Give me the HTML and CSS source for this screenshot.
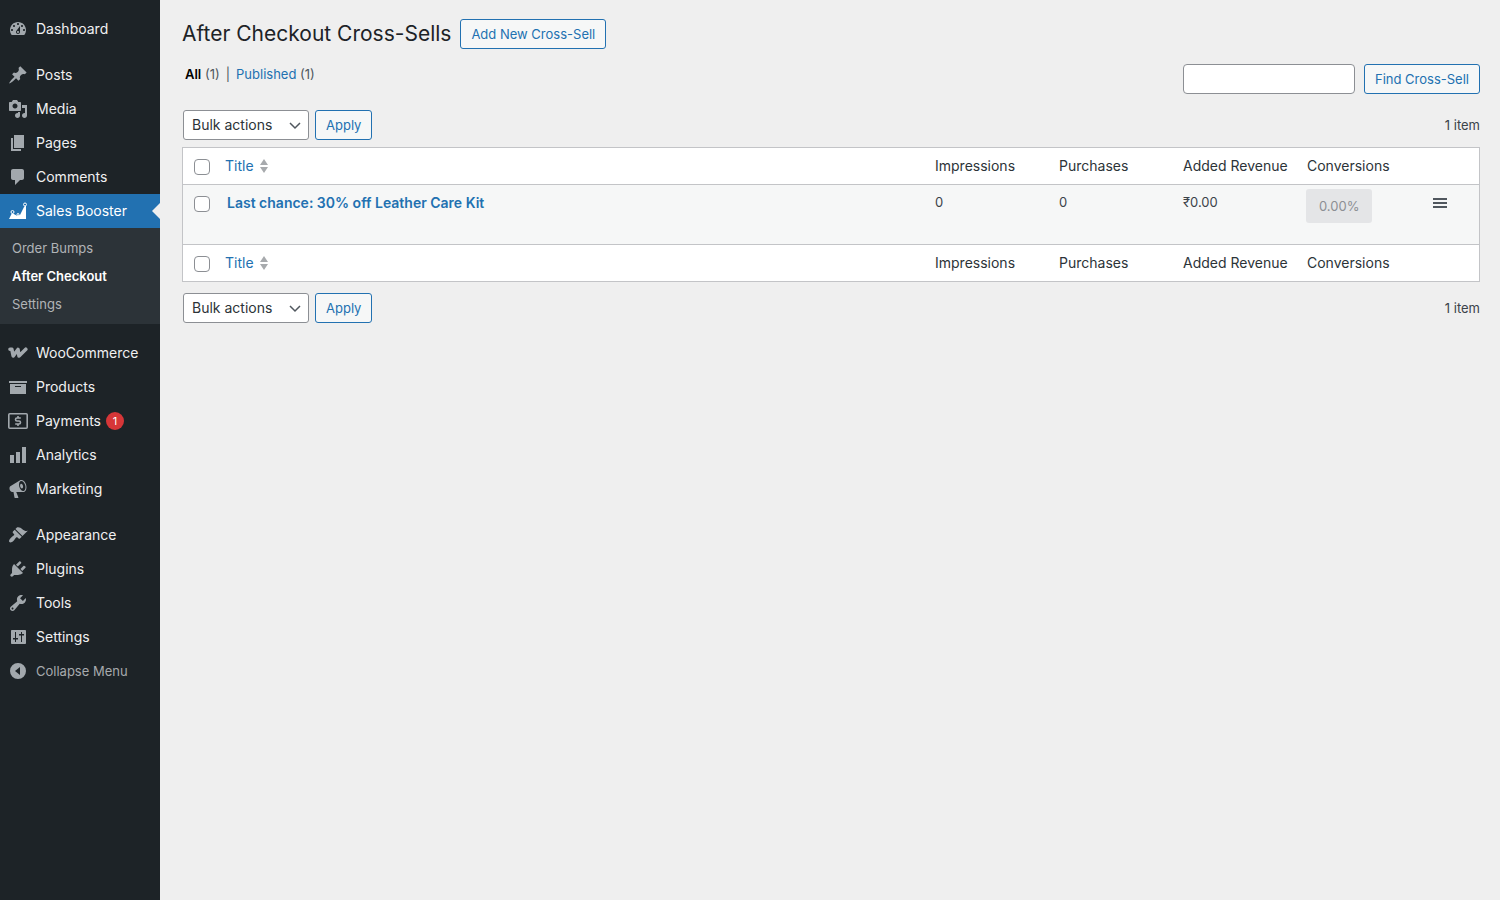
FILE: index.html
```html
<!DOCTYPE html>
<html lang="en">
<head>
    <meta charset="UTF-8">
    <meta name="viewport" content="width=device-width, initial-scale=1.0">
    <title>After Checkout Cross-Sells</title>
    <link rel="stylesheet" href="styles.css">
</head>
<body>
    <div class="layout">
        <nav class="sidebar" aria-label="Main menu">
            <ul class="menu">
                <li><a href="#"><svg viewBox="0 0 20 20"><path d="M3.76 16h12.48c1.1-1.37 1.76-3.11 1.76-5 0-4.42-3.58-8-8-8s-8 3.58-8 8c0 1.89.66 3.63 1.76 5zM10 4c.55 0 1 .45 1 1s-.45 1-1 1-1-.45-1-1 .45-1 1-1zM6 6c.55 0 1 .45 1 1s-.45 1-1 1-1-.45-1-1 .45-1 1-1zm8 0c.55 0 1 .45 1 1s-.45 1-1 1-1-.45-1-1 .45-1 1-1zm-5.37 5.55L12 7v6c0 1.1-.9 2-2 2s-2-.9-2-2c0-.57.24-1.08.63-1.45zM4 10c.55 0 1 .45 1 1s-.45 1-1 1-1-.45-1-1 .45-1 1-1zm12 0c.55 0 1 .45 1 1s-.45 1-1 1-1-.45-1-1 .45-1 1-1zm-5 3c0-.55-.45-1-1-1s-1 .45-1 1 .45 1 1 1 1-.45 1-1z"/></svg>Dashboard</a></li>
            </ul>
            <ul class="menu">
                <li><a href="#"><svg viewBox="0 0 20 20"><path d="M10.44 3.02l1.82-1.82 6.36 6.35-1.83 1.82c-1.05-.68-2.48-.57-3.41.36l-.75.75c-.92.93-1.04 2.35-.35 3.41l-1.83 1.82-2.41-2.41-2.8 2.79c-.42.42-3.38 2.71-3.8 2.29s1.86-3.39 2.28-3.81l2.79-2.79L4.1 9.36l1.83-1.82c1.05.69 2.48.57 3.4-.36l.75-.75c.93-.92 1.05-2.35.36-3.41z"/></svg>Posts</a></li>
                <li><a href="#"><svg viewBox="0 0 20 20"><path d="M13 11V4c0-.55-.45-1-1-1h-1.67L9 1H5L3.67 3H2c-.55 0-1 .45-1 1v7c0 .55.45 1 1 1h10c.55 0 1-.45 1-1zM7 4.5c1.38 0 2.5 1.12 2.5 2.5S8.38 9.5 7 9.5 4.5 8.38 4.5 7 5.62 4.5 7 4.5zM14 6h5v10.5c0 1.38-1.12 2.5-2.5 2.5S14 17.88 14 16.5s1.12-2.5 2.5-2.5c.17 0 .34.02.5.05V9h-3V6zm-4 8.05V13h2v3.5c0 1.38-1.12 2.5-2.5 2.5S7 17.88 7 16.5 8.12 14 9.5 14c.17 0 .34.02.5.05z"/></svg>Media</a></li>
                <li><a href="#"><svg viewBox="0 0 20 20"><path d="M6 15V2h10v13H6zm-1 1h8v2H3V5h2v11z"/></svg>Pages</a></li>
                <li><a href="#"><svg viewBox="0 0 20 20"><path d="M5 2h9c1.1 0 2 .9 2 2v7c0 1.1-.9 2-2 2h-2l-5 5v-5H5c-1.1 0-2-.9-2-2V4c0-1.1.9-2 2-2z"/></svg>Comments</a></li>
                <li class="current">
                    <a href="#"><svg viewBox="0 0 20 20"><path d="M1 18l3-6 4.5 2.5 3.500-.5L16 6l2-2v14z"/><g class="ring"><circle cx="4.500" cy="11" r="1.500"/><circle cx="10" cy="13.500" r="1"/><circle cx="17" cy="3.500" r="1.500"/></g></svg>Sales Booster</a>
                    <ul class="submenu">
                        <li><a href="#">Order Bumps</a></li>
                        <li><a href="#" class="active">After Checkout</a></li>
                        <li><a href="#">Settings</a></li>
                    </ul>
                </li>
            </ul>
            <ul class="menu">
                <li><a href="#"><svg viewBox="0 0 20 20"><path class="woo" d="M2 6.200h1.800L5.200 13 10 6.500l1 6.500 6.800-6.800"/></svg>WooCommerce</a></li>
                <li><a href="#"><svg viewBox="0 0 20 20"><path d="M19 4v2H1V4h18zM2 7h16v10H2V7zm11 3V9H7v1h6z"/></svg>Products</a></li>
                <li><a href="#"><svg viewBox="0 0 20 20"><rect class="line" x=".8" y="2.800" width="18.400" height="14.400" rx="1"/><path class="line" d="M12.800 7H9a1.500 1.500 0 0 0 0 3h2a1.500 1.500 0 0 1 0 3H7.200M10 5v2M10 13v2"/></svg>Payments<span class="count">1</span></a></li>
                <li><a href="#"><svg viewBox="0 0 20 20"><path d="M18 18V2h-4v16h4zm-6 0V7H8v11h4zm-6 0v-8H2v8h4z"/></svg>Analytics</a></li>
                <li><a href="#"><svg viewBox="0 0 20 20"><path d="M18.150 5.940c.46 1.620.38 3.220-.02 4.480-.42 1.280-1.260 2.180-2.300 2.480-.16.06-.26.06-.4.06-.06.02-.12.02-.18.02-.06.02-.14.02-.22.02h-6.800l2.220 5.500c.02.14-.06.26-.14.34-.08.1-.24.16-.34.16H6.950c-.1 0-.26-.06-.34-.16-.08-.08-.16-.2-.14-.34l-1-5.500H4.250l-.02-.02c-.5.06-1.080-.18-1.540-.62s-.88-1.080-1.060-1.880c-.24-.8-.2-1.560-.02-2.200.18-.62.58-1.080 1.060-1.300l.02-.02 9-5.400c.1-.06.18-.1.24-.16.06-.04.14-.08.24-.12.16-.08.28-.12.5-.18 1.040-.3 2.240.1 3.220.98s1.840 2.240 2.260 3.860zm-2.580 5.980h-.02c.4-.1.74-.34 1.040-.7.58-.7.86-1.760.86-3.040 0-.64-.1-1.300-.28-1.980-.34-1.360-1.020-2.500-1.780-3.240s-1.680-1.100-2.460-.88c-.82.22-1.400.96-1.700 2-.32 1.040-.28 2.360.06 3.720.38 1.360 1 2.500 1.800 3.240.78.74 1.620 1.100 2.480.88zm-2.540-7.080c.22-.04.42-.02.62.04.38.16.76.48 1.020 1s.42 1.200.42 1.780c0 .3-.04.56-.12.8-.18.48-.44.84-.86.94-.34.1-.8-.06-1.140-.4s-.64-.86-.78-1.500c-.18-.62-.12-1.240.02-1.720s.48-.84.82-.94z"/></svg>Marketing</a></li>
            </ul>
            <ul class="menu">
                <li><a href="#"><svg viewBox="0 0 20 20"><path d="M14.480 11.060L7.410 3.990l1.500-1.500c.5-.56 2.300-.47 3.510.32 1.210.8 1.430 1.280 2.910 2.100 1.180.64 2.450 1.260 4.450.85zm-.71.71L6.700 4.700 4.930 6.470c-.39.39-.39 1.020 0 1.410l1.060 1.060c.39.39.39 1.030 0 1.420-.6.6-1.430 1.110-2.210 1.690-.35.26-.7.53-1.010.84C1.430 14.230.4 16.080 1.400 17.070c.99 1 2.840-.03 4.180-1.360.31-.31.58-.66.85-1.020.57-.78 1.080-1.610 1.690-2.210.39-.39 1.020-.39 1.410 0l1.060 1.060c.39.39 1.020.39 1.410 0z"/></svg>Appearance</a></li>
                <li><a href="#"><svg viewBox="0 0 20 20"><path d="M13.110 4.360L9.870 7.600 8 5.730l3.240-3.240c.35-.34 1.050-.2 1.560.32.52.51.66 1.210.31 1.550zm-8 1.770l.91-1.120 9.010 9.010-1.190.84c-.71.71-2.630 1.160-3.820 1.160H6.140L4.900 17.260c-.59.59-1.540.59-2.120 0-.59-.58-.59-1.530 0-2.120l1.240-1.240v-3.880c0-1.130.4-3.190 1.090-3.890zm7.260 3.970l3.240-3.240c.34-.35 1.040-.21 1.550.31.52.51.66 1.210.31 1.550l-3.240 3.250z"/></svg>Plugins</a></li>
                <li><a href="#"><svg viewBox="0 0 20 20"><path d="M16.680 9.770c-1.340 1.340-3.300 1.670-4.950.99l-5.410 6.520c-.99.99-2.590.99-3.580 0s-.99-2.590 0-3.570l6.520-5.420c-.68-1.650-.35-3.610.99-4.950 1.280-1.280 3.120-1.620 4.720-1.060l-2.890 2.890 2.820 2.820 2.860-2.870c.53 1.580.18 3.390-1.080 4.650zM3.810 16.210c.4.39 1.040.39 1.430 0 .4-.4.4-1.040 0-1.430-.39-.4-1.030-.4-1.430 0-.39.39-.39 1.030 0 1.430z"/></svg>Tools</a></li>
                <li><a href="#"><svg viewBox="0 0 20 20"><path fill-rule="evenodd" d="M18 16V4c0-.55-.45-1-1-1H4c-.55 0-1 .45-1 1v12c0 .55.45 1 1 1h13c.55 0 1-.45 1-1zM7 5h1v6h2v1.500H8V15H7v-2.500H5V11h2zM13 5h1v2h2v1.500h-2V15h-1V8.500h-2V7h2z"/></svg>Settings</a></li>
                <li><button type="button" class="collapse"><svg viewBox="0 0 20 20"><path fill-rule="evenodd" d="M10 2a8 8 0 1 0 0 16 8 8 0 0 0 0-16zM12 6v8l-5-4z"/></svg>Collapse Menu</button></li>
            </ul>
        </nav>

        <main class="content">
            <header class="page-header">
                <h1>After Checkout Cross-Sells</h1>
                <a href="#" class="button">Add New Cross-Sell</a>
            </header>

            <div class="filters">
                <ul class="views">
                    <li><a href="#" class="selected">All</a> (1)</li>
                    <li>|</li>
                    <li><a href="#">Published</a> (1)</li>
                </ul>
                <form class="search">
                    <input type="search" aria-label="Search cross-sells">
                    <button type="button" class="button">Find Cross-Sell</button>
                </form>
            </div>

            <div class="tablenav">
                <select aria-label="Select bulk action">
                    <option>Bulk actions</option>
                </select>
                <button type="button" class="button">Apply</button>
                <span class="items">1 item</span>
            </div>

            <table>
                <thead>
                    <tr>
                        <td class="check"><input type="checkbox" aria-label="Select all"></td>
                        <th><a href="#">Title<svg class="sort" viewBox="0 0 8 14"><path d="M0 6l4-6 4 6zM0 8h8l-4 6z"/></svg></a></th>
                        <th class="stat">Impressions</th>
                        <th class="stat">Purchases</th>
                        <th class="stat">Added Revenue</th>
                        <th class="stat">Conversions</th>
                        <td class="handle"></td>
                    </tr>
                </thead>
                <tbody>
                    <tr>
                        <td class="check"><input type="checkbox" aria-label="Select Last chance: 30% off Leather Care Kit"></td>
                        <td class="title"><a href="#">Last chance: 30% off Leather Care Kit</a></td>
                        <td>0</td>
                        <td>0</td>
                        <td>₹0.00</td>
                        <td class="rate-cell"><button type="button" class="rate" disabled>0.00%</button></td>
                        <td class="handle"><svg viewBox="0 0 18 18"><path d="M2 4h14v2H2zM2 8h14v2H2zM2 12h14v2H2z"/></svg></td>
                    </tr>
                </tbody>
                <tfoot>
                    <tr>
                        <td class="check"><input type="checkbox" aria-label="Select all"></td>
                        <th><a href="#">Title<svg class="sort" viewBox="0 0 8 14"><path d="M0 6l4-6 4 6zM0 8h8l-4 6z"/></svg></a></th>
                        <th>Impressions</th>
                        <th>Purchases</th>
                        <th>Added Revenue</th>
                        <th>Conversions</th>
                        <td class="handle"></td>
                    </tr>
                </tfoot>
            </table>

            <div class="tablenav bottom">
                <select aria-label="Select bulk action">
                    <option>Bulk actions</option>
                </select>
                <button type="button" class="button">Apply</button>
                <span class="items">1 item</span>
            </div>
        </main>
    </div>
</body>
</html>
```
FILE: styles.css
```css
* {
    box-sizing: border-box;
}

body {
    margin: 0;
    background: #efefef;
    color: #3c434a;
    font-family: Inter, "Liberation Sans", sans-serif;
    font-size: 13px;
    line-height: 18px;
}

ul {
    list-style: none;
    margin: 0;
    padding: 0;
}

a {
    color: #2271b1;
    text-decoration: none;
}

button, input, select {
    font-family: inherit;
    margin: 0;
}

.layout {
    display: flex;
    min-height: 100vh;
}

/* Sidebar */
.sidebar {
    width: 160px;
    flex-shrink: 0;
    background: #1d2327;
}

.menu {
    padding-top: 12px;
}

.menu a, .collapse {
    display: flex;
    align-items: center;
    gap: 8px;
    height: 34px;
    padding: 0 8px;
    color: #f0f0f1;
    font-size: 14px;
}

.menu svg {
    width: 20px;
    height: 20px;
    flex-shrink: 0;
    fill: #a2a8ad;
}

.menu .line {
    fill: none;
    stroke: #a2a8ad;
    stroke-width: 1.6;
}

.menu .woo {
    fill: none;
    stroke: #a2a8ad;
    stroke-width: 3.6;
    stroke-linecap: round;
    stroke-linejoin: round;
}

.collapse {
    width: 100%;
    border: 0;
    background: none;
    color: #a7aaad;
    font-size: 13px;
    cursor: pointer;
}

.current > a {
    position: relative;
    background: #2271b1;
    color: #fff;
}

.current > a::after {
    content: "";
    position: absolute;
    right: 0;
    top: 9px;
    border: 8px solid transparent;
    border-left: 0;
    border-right-color: #efefef;
}

.current svg {
    fill: #fff;
}

.current .ring {
    fill: #2271b1;
    stroke: #fff;
}

.menu .submenu {
    padding: 6px 0;
    background: #2c3338;
}

.menu .submenu a {
    height: 28px;
    padding: 0 12px;
    color: #b1b4b7;
    font-size: 13px;
}

.menu .submenu .active {
    color: #fff;
    font-weight: 600;
}

.count {
    min-width: 18px;
    margin-left: -3px;
    border-radius: 9px;
    background: #d63638;
    color: #fff;
    font-size: 11px;
    text-align: center;
}

/* Content */
.content {
    flex: 1;
    padding: 18px 20px 0 22px;
}

.page-header {
    display: flex;
    align-items: center;
    gap: 9px;
    height: 32px;
}

h1 {
    margin: 0;
    color: #1d2327;
    font-size: 21px;
    font-weight: 400;
    line-height: 30px;
}

.button {
    height: 30px;
    padding: 0 10px;
    border: 1px solid #2271b1;
    border-radius: 3px;
    background: #f6f7f7;
    color: #2271b1;
    font-size: 13px;
    line-height: 28px;
    white-space: nowrap;
    cursor: pointer;
}

.filters {
    display: flex;
    justify-content: space-between;
    margin-top: 14px;
}

.views {
    display: flex;
    gap: 6px;
    padding: 1px 3px;
    color: #50575e;
}

.views .selected {
    color: #000;
    font-weight: 600;
}

.search {
    display: flex;
    gap: 9px;
}

.search input {
    width: 172px;
    height: 30px;
    border: 1px solid #8c8f94;
    border-radius: 4px;
    background: #fff;
    appearance: none;
}

.tablenav {
    display: flex;
    align-items: center;
    gap: 6px;
    padding: 16px 0 7px 1px;
}

.tablenav.bottom {
    padding-top: 11px;
}

.tablenav select {
    width: 126px;
    height: 30px;
    padding: 0 24px 1px 8px;
    border: 1px solid #8c8f94;
    border-radius: 3px;
    background: #fff url('data:image/svg+xml;utf8,<svg xmlns="http://www.w3.org/2000/svg" viewBox="0 0 16 16"><path d="M3 6l5 5 5-5" fill="none" stroke="%2350575e" stroke-width="1.5"/></svg>') no-repeat right 5px center / 16px 16px;
    color: #2c3338;
    font-size: 14px;
    appearance: none;
}

.items {
    margin-left: auto;
}

/* List table */
table {
    width: 100%;
    table-layout: fixed;
    border: 1px solid #c3c4c7;
    border-spacing: 0;
    background: #fff;
}

th, td {
    padding: 8px;
    text-align: left;
    vertical-align: top;
}

th {
    color: #2c3338;
    font-size: 14px;
    font-weight: 400;
    line-height: 20px;
}

tbody td {
    height: 61px;
    border-top: 1px solid #c3c4c7;
    border-bottom: 1px solid #c3c4c7;
    background: #f6f7f7;
}

tbody td.title {
    padding-top: 9px;
    padding-left: 10px;
    font-size: 14px;
    font-weight: 600;
}

.check {
    width: 34px;
    padding: 11px 0 0 11px;
}

.check input {
    display: block;
    width: 16px;
    height: 16px;
    border: 1px solid #8c8f94;
    border-radius: 4px;
    background: #fff;
    appearance: none;
}

.stat {
    width: 124px;
}

.handle {
    width: 56px;
}

tbody .handle {
    padding-top: 9px;
}

.handle svg {
    display: block;
    width: 18px;
    height: 18px;
    fill: #50575e;
}

.sort {
    width: 8px;
    height: 14px;
    margin-left: 6px;
    vertical-align: -2px;
    fill: #a7aaad;
}

tbody .rate-cell {
    padding-top: 4px;
    padding-left: 7px;
}

.rate {
    height: 34px;
    padding: 0 13px;
    border: 0;
    border-radius: 3px;
    background: #e4e5e7;
    color: #8c8f94;
    font-size: 13px;
}
```
